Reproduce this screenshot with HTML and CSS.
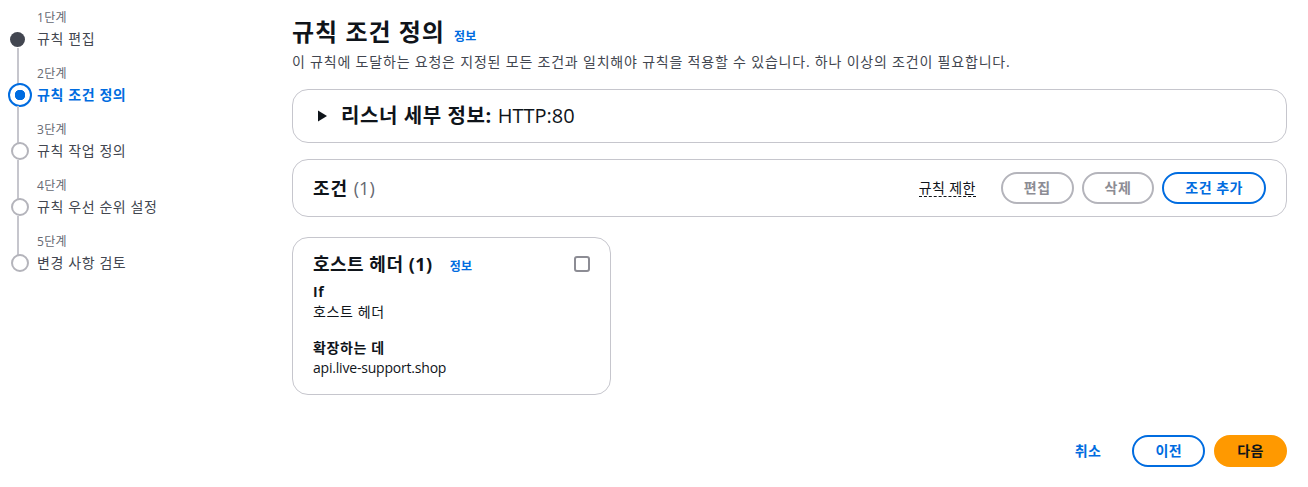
FILE: index.html
```html
<!DOCTYPE html>
<html lang="ko">
<head>
<meta charset="utf-8">
<title>규칙 조건 정의</title>
<link rel="stylesheet" href="styles.css">
</head>
<body>
<div class="layout">
  <nav class="steps">
    <ol class="step-list">
      <li class="step done">
        <span class="step-label">1단계</span>
        <span class="step-icon"></span>
        <span class="step-title">규칙 편집</span>
      </li>
      <li class="step current">
        <span class="step-label">2단계</span>
        <span class="step-icon"></span>
        <span class="step-title">규칙 조건 정의</span>
      </li>
      <li class="step">
        <span class="step-label">3단계</span>
        <span class="step-icon"></span>
        <span class="step-title">규칙 작업 정의</span>
      </li>
      <li class="step">
        <span class="step-label">4단계</span>
        <span class="step-icon"></span>
        <span class="step-title">규칙 우선 순위 설정</span>
      </li>
      <li class="step last">
        <span class="step-label">5단계</span>
        <span class="step-icon"></span>
        <span class="step-title">변경 사항 검토</span>
      </li>
    </ol>
  </nav>

  <main class="main">
    <header class="page-header">
      <div class="title-row">
        <h1 class="page-title">규칙 조건 정의</h1>
        <a class="info-link">정보</a>
      </div>
      <p class="page-desc">이 규칙에 도달하는 요청은 지정된 모든 조건과 일치해야 규칙을 적용할 수 있습니다. 하나 이상의 조건이 필요합니다.</p>
    </header>

    <section class="panel expand">
      <span class="caret"><svg width="12" height="12" viewBox="0 0 12 12"><path d="M2 0.5 L11 6 L2 11.5 Z" fill="#0f141a"/></svg></span>
      <h2 class="expand-title">리스너 세부 정보: <span class="normal">HTTP:80</span></h2>
    </section>

    <section class="panel cond-head">
      <h2 class="cond-title">조건 <span class="count">(1)</span></h2>
      <div class="actions">
        <span class="rule-limit">규칙 제한</span>
        <button class="btn disabled">편집</button>
        <button class="btn disabled">삭제</button>
        <button class="btn normal-btn">조건 추가</button>
      </div>
    </section>

    <div class="cards">
      <article class="card">
        <div class="card-head">
          <div class="card-title-row">
            <h3 class="card-title">호스트 헤더 (1)</h3>
            <a class="info-link">정보</a>
          </div>
          <span class="checkbox"></span>
        </div>
        <dl class="kv">
          <dt>If</dt>
          <dd>호스트 헤더</dd>
          <dt class="gap">확장하는 데</dt>
          <dd class="lat">api.live-support.shop</dd>
        </dl>
      </article>
    </div>

    <footer class="footer">
      <button class="btn link">취소</button>
      <button class="btn normal-btn">이전</button>
      <button class="btn primary">다음</button>
    </footer>
  </main>
</div>
</body>
</html>
```
FILE: styles.css
```css
* { box-sizing: border-box; }
html, body { margin: 0; padding: 0; background: #fff; }
body {
  font-family: "Open Sans", "Noto Sans CJK KR", sans-serif;
  font-size: 14px;
  line-height: 20px;
  color: #0f141a;
  letter-spacing: 0.6px;
}
.layout {
  display: grid;
  grid-template-columns: 292px 1fr;
  padding-right: 21px;
}

/* steps */
.steps { padding: 10px 0 0 8px; }
.step-list { list-style: none; margin: 0; padding: 0; display: flex; flex-direction: column; gap: 17px; }
.step {
  display: grid;
  grid-template-columns: 29px 1fr;
  grid-template-rows: 16px 20px;
  row-gap: 3px;
}
.step-label {
  grid-column: 2; grid-row: 1;
  font-size: 12px; line-height: 16px; color: #656871;
  letter-spacing: 0.3px;
}
.step-title {
  grid-column: 2; grid-row: 2;
  color: #424650;
}
.step-icon {
  grid-column: 1; grid-row: 2;
  position: relative;
  display: flex; align-items: center; justify-content: flex-start;
}
.step-icon::before {
  content: "";
  width: 14px; height: 14px; margin-left: 3px;
  border-radius: 50%;
  border: 2px solid #b4b4bb;
  background: #fff;
}
.step-icon::after {
  content: "";
  position: absolute;
  left: 9px; top: 19px;
  width: 2px; height: 39px;
  background: #c6c6cd;
}
.step.last .step-icon::after { display: none; }
.step.done .step-icon::before {
  width: 15px; height: 15px; margin-left: 2px;
  border: none; background: #424650;
}
.step.current .step-icon::before {
  width: 20px; height: 20px; margin-left: 0;
  border: 2px solid #006ce0;
  background: radial-gradient(circle, #006ce0 0 5px, #fff 5.5px);
}
.step.current .step-icon::after { top: 21px; height: 37px; }
.step.current .step-title { color: #006ce0; font-weight: 700; }

/* main */
.main { padding-top: 17px; }
.title-row { display: flex; align-items: baseline; gap: 9px; }
.page-title {
  margin: 0; font-size: 24px; line-height: 30px; font-weight: 700;
  color: #0f141a; letter-spacing: 1px;
}
.info-link {
  font-size: 12px; line-height: 16px; font-weight: 700; color: #006ce0;
  letter-spacing: 0.3px;
}
.page-desc { margin: 5px 0 0; color: #424650; letter-spacing: 0.8px; }

.panel {
  border: 1px solid #c6c6cd;
  border-radius: 16px;
  background: #fff;
}
.expand {
  margin-top: 17px;
  display: flex; align-items: center;
  padding: 14px 20px 14px 23px;
}
.caret { display: flex; width: 12px; margin-right: 13px; }
.expand-title { margin: 0; font-size: 20px; line-height: 24px; font-weight: 700; letter-spacing: 0.6px; }
.normal { font-weight: 400; letter-spacing: 0; }

.cond-head {
  margin-top: 16px;
  display: flex; align-items: center; justify-content: space-between;
  padding: 12px 20px 12px 20px;
}
.cond-title { margin: 0; font-size: 18px; line-height: 22px; font-weight: 700; letter-spacing: 1px; }
.count { font-weight: 400; color: #656871; letter-spacing: 0; }
.actions { display: flex; align-items: center; gap: 8px; }
.rule-limit {
  color: #0f141a;
  border-bottom: 1px dashed #0f141a;
  line-height: 17px;
  margin-right: 17px;
  letter-spacing: 0.4px;
}
.btn {
  font: inherit; font-weight: 700; font-size: 14px; line-height: 20px;
  letter-spacing: 0.5px;
  height: 32px; padding: 4px 21px;
  border-radius: 20px; border: 2px solid #006ce0;
  background: #fff; color: #006ce0;
  cursor: pointer;
}
.btn.disabled { border-color: #b4b4bb; color: #8c8c94; }
.btn.primary { background: #ff9900; border-color: #ff9900; color: #0f141a; }
.btn.link { border-color: transparent; padding: 4px 20px; }

.cards { margin-top: 20px; display: grid; grid-template-columns: 319px; }
.card {
  border: 1px solid #c6c6cd; border-radius: 16px;
  padding: 15px 20px 16px 20px;
}
.card-head { display: flex; justify-content: space-between; align-items: flex-start; }
.card-title-row { display: flex; align-items: baseline; gap: 17px; }
.card-title { margin: 0; font-size: 18px; line-height: 22px; font-weight: 700; letter-spacing: 0.5px; }
.checkbox {
  width: 16px; height: 16px; margin-top: 3px;
  border: 2px solid #8c8c94; border-radius: 3px;
}
.kv { margin: 7px 0 0; }
.kv dt { font-weight: 700; }
.kv dd { margin: 0; }
.kv dd.lat { letter-spacing: -0.2px; }
.kv dt.gap { margin-top: 16px; }

.footer {
  display: flex; justify-content: flex-end; align-items: center; gap: 9px;
  margin-top: 40px;
}
```
